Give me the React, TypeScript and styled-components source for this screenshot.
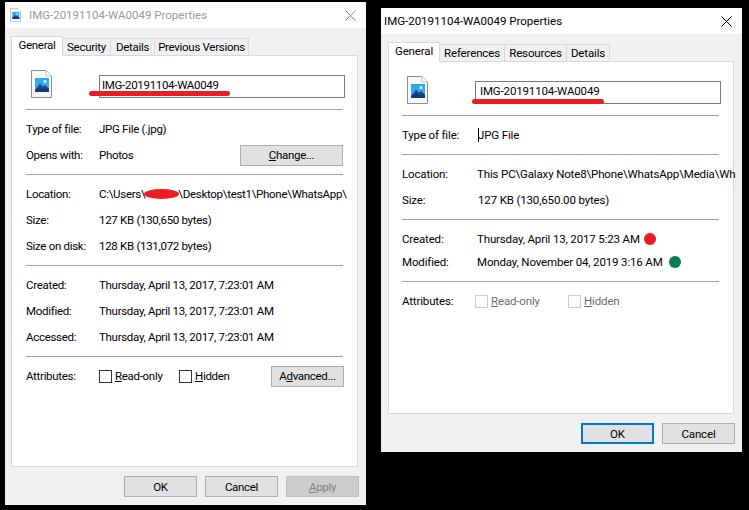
import styled, { createGlobalStyle } from 'styled-components';

const GlobalStyle = createGlobalStyle`
  html, body {
    margin: 0;
    padding: 0;
    background: #000;
  }
  * {
    box-sizing: border-box;
  }
`;

const Desktop = styled.div`
  display: flex;
  align-items: flex-start;
  gap: 15px;
  width: 749px;
  height: 510px;
  padding: 2px 0 0 5px;
  overflow: hidden;
  background: #000;
`;

const Window = styled.div<{ $height: number; $top: number; $label: number; $spacing: number }>`
  --label: ${(p) => p.$label}px;
  display: flex;
  flex-direction: column;
  flex: none;
  width: 361px;
  height: ${(p) => p.$height}px;
  margin-top: ${(p) => p.$top}px;
  background: #f0f0f0;
  color: #000;
  font-family: Roboto, 'Open Sans', sans-serif;
  font-size: 11.5px;
  letter-spacing: ${(p) => p.$spacing}px;
`;

const TitleBar = styled.div<{ $inactive?: boolean }>`
  display: flex;
  align-items: center;
  gap: 8px;
  flex: none;
  height: 26px;
  padding: 0 10px 0 ${(p) => (p.$inactive ? 5 : 3)}px;
  background: #fff;
  color: ${(p) => (p.$inactive ? '#999' : '#000')};
  font-size: 11.5px;
  letter-spacing: 0;
`;

const TitleText = styled.span`
  flex: 1;
  white-space: nowrap;
`;

const TabStrip = styled.div<{ $pad: number }>`
  display: flex;
  align-items: flex-end;
  flex: none;
  height: 28px;
  padding-left: ${(p) => p.$pad}px;
  margin-bottom: -1px;
  position: relative;
  z-index: 1;
`;

const Tab = styled.div<{ $active?: boolean; $width: number }>`
  display: flex;
  align-items: center;
  justify-content: center;
  width: ${(p) => p.$width}px;
  height: ${(p) => (p.$active ? 20 : 18)}px;
  margin-left: -1px;
  padding-bottom: ${(p) => (p.$active ? 3 : 0)}px;
  border: 1px solid #d9d9d9;
  border-bottom: ${(p) => (p.$active ? 'none' : '1px solid #d9d9d9')};
  background: ${(p) => (p.$active ? '#fff' : '#f0f0f0')};
  white-space: nowrap;
`;

const Panel = styled.div<{ $left: number; $pad: number }>`
  flex: 1;
  display: flex;
  flex-direction: column;
  margin: 0 8px 0 ${(p) => p.$left}px;
  padding: 0 14px 0 ${(p) => p.$pad}px;
  border: 1px solid #d9d9d9;
  background: #fff;
  min-height: 0;
`;

const Header = styled.div`
  display: grid;
  grid-template-columns: var(--label) 1fr;
  height: 53px;
  padding-top: 14px;
  position: relative;
`;

const IconSlot = styled.div`
  padding-left: 5px;
`;

const NameField = styled.div<{ $shift: number; $indent: number }>`
  display: flex;
  align-items: center;
  height: 23px;
  margin: 5px -2px 0 ${(p) => p.$shift}px;
  padding: 0 0 3px ${(p) => p.$indent}px;
  border: 1px solid #7a7a7a;
  background: #fff;
`;

const Scribble = styled.div<{ $left: number; $top: number; $width: number; $height: number }>`
  position: absolute;
  left: ${(p) => p.$left}px;
  top: ${(p) => p.$top}px;
  width: ${(p) => p.$width}px;
  height: ${(p) => p.$height}px;
  border-radius: 3px;
  background: #ed1c24;
`;

const Section = styled.div<{ $top?: number; $bottom?: number }>`
  padding: ${(p) => p.$top ?? 6}px 0 ${(p) => p.$bottom ?? 6}px;
  border-top: 1px solid #a0a0a0;
`;

const Row = styled.div<{ $height?: number }>`
  display: grid;
  grid-template-columns: var(--label) minmax(0, 1fr) auto;
  align-items: center;
  height: ${(p) => p.$height ?? 26}px;
`;

const Label = styled.span`
  padding-bottom: 1px;
  white-space: nowrap;
`;

const Value = styled.span<{ $indent?: number }>`
  display: flex;
  align-items: center;
  padding: 0 0 1px ${(p) => p.$indent ?? 0}px;
  white-space: nowrap;
`;

const Caret = styled.span`
  flex: none;
  width: 1px;
  height: 14px;
  margin-right: -1px;
  background: #000;
`;

const Redacted = styled.span`
  flex: none;
  width: 35px;
  height: 10px;
  margin: 0 -1px;
  border-radius: 50%;
  background: #ed1c24;
`;

const Dot = styled.span<{ $color: string; $gap: number }>`
  flex: none;
  width: 12px;
  height: 12px;
  margin-left: ${(p) => p.$gap}px;
  border-radius: 50%;
  background: ${(p) => p.$color};
`;

const Checks = styled.div<{ $shift?: number }>`
  display: flex;
  margin-left: ${(p) => p.$shift ?? 0}px;
`;

const Check = styled.label<{ $width: number; $disabled?: boolean }>`
  display: flex;
  align-items: center;
  gap: 3px;
  width: ${(p) => p.$width}px;
  color: ${(p) => (p.$disabled ? '#6d6d6d' : '#000')};
`;

const CheckBox = styled.span<{ $disabled?: boolean }>`
  flex: none;
  width: 13px;
  height: 13px;
  border: 1px solid ${(p) => (p.$disabled ? '#ccc' : '#333')};
  background: #fff;
`;

const Footer = styled.div`
  display: flex;
  justify-content: flex-end;
  gap: 8px;
  flex: none;
  height: 38px;
  padding: 9px 7px 0 0;
`;

const Button = styled.div<{ $width?: number; $default?: boolean; $disabled?: boolean; $pull?: number }>`
  display: flex;
  align-items: center;
  justify-content: center;
  width: ${(p) => p.$width ?? 73}px;
  height: 21px;
  margin-right: ${(p) => p.$pull ?? 0}px;
  border: ${(p) => (p.$default ? '2px solid #0078d7' : p.$disabled ? '1px solid #bfbfbf' : '1px solid #adadad')};
  background: ${(p) => (p.$disabled ? '#ccc' : '#e1e1e1')};
  color: ${(p) => (p.$disabled ? '#838383' : '#000')};
`;

const CloseIcon = styled.svg<{ $color: string }>`
  flex: none;
  width: 11px;
  height: 11px;
  stroke: ${(p) => p.$color};
  stroke-width: 1;
  fill: none;
`;

function FileIcon({ small }: { small?: boolean }) {
  const id = small ? 'sky-small' : 'sky';
  return (
    <svg width={small ? 11 : 21} height={small ? 14 : 28} viewBox="0 0 21 28" style={{ display: 'block', flex: 'none' }}>
      <defs>
        <linearGradient id={id} x1="0" y1="0" x2="0" y2="1">
          <stop offset="0" stopColor="#27a4ea" />
          <stop offset="1" stopColor="#4cb5f0" />
        </linearGradient>
      </defs>
      <path d="M0.5 0.5H15L20.5 6V27.5H0.5Z" fill="#f6f8fa" stroke="#8c8c8c" />
      <path d="M15 0.5V6H20.5" fill="#fff" stroke="#c4c4c4" />
      <rect x="4" y="8" width="14" height="14" fill={`url(#${id})`} />
      <rect x="12.5" y="10" width="3" height="3" fill="#c4e8fb" />
      <path d="M4 20L9 13.5L12 16.5L14 15L18 18.5V22H4Z" fill="#1d4f96" />
      <path d="M4 22V20L9 17L13 19L18 18.5V22Z" fill="#153a78" />
    </svg>
  );
}

function Close({ color }: { color: string }) {
  return (
    <CloseIcon $color={color} viewBox="0 0 11 11">
      <path d="M0.5 0.5L10.5 10.5M10.5 0.5L0.5 10.5" />
    </CloseIcon>
  );
}

export default function App() {
  return (
    <>
      <GlobalStyle />
      <Desktop>
        <Window $height={503} $top={0} $label={73} $spacing={-0.3}>
          <TitleBar $inactive>
            <FileIcon small />
            <TitleText>IMG-20191104-WA0049 Properties</TitleText>
            <Close color="#8a8a8a" />
          </TitleBar>
          <TabStrip $pad={7}>
            <Tab $active $width={52}>General</Tab>
            <Tab $width={49}>Security</Tab>
            <Tab $width={45}>Details</Tab>
            <Tab $width={95}>Previous Versions</Tab>
          </TabStrip>
          <Panel $left={6} $pad={14}>
            <Header>
              <IconSlot>
                <FileIcon />
              </IconSlot>
              <NameField $shift={0} $indent={2}>IMG-20191104-WA0049</NameField>
              <Scribble $left={63} $top={35} $width={141} $height={5} />
            </Header>
            <Section>
              <Row>
                <Label>Type of file:</Label>
                <Value>JPG File (.jpg)</Value>
              </Row>
              <Row>
                <Label>Opens with:</Label>
                <Value>Photos</Value>
                <Button $width={103}><span><u>C</u>hange...</span></Button>
              </Row>
            </Section>
            <Section>
              <Row>
                <Label>Location:</Label>
                <Value>C:\Users\<Redacted />\Desktop\test1\Phone\WhatsApp\</Value>
              </Row>
              <Row>
                <Label>Size:</Label>
                <Value>127 KB (130,650 bytes)</Value>
              </Row>
              <Row>
                <Label>Size on disk:</Label>
                <Value>128 KB (131,072 bytes)</Value>
              </Row>
            </Section>
            <Section>
              <Row>
                <Label>Created:</Label>
                <Value>Thursday, April 13, 2017, 7:23:01 AM</Value>
              </Row>
              <Row>
                <Label>Modified:</Label>
                <Value>Thursday, April 13, 2017, 7:23:01 AM</Value>
              </Row>
              <Row>
                <Label>Accessed:</Label>
                <Value>Thursday, April 13, 2017, 7:23:01 AM</Value>
              </Row>
            </Section>
            <Section>
              <Row>
                <Label>Attributes:</Label>
                <Checks>
                  <Check $width={80}><CheckBox /><span><u>R</u>ead-only</span></Check>
                  <Check $width={70}><CheckBox /><span><u>H</u>idden</span></Check>
                </Checks>
                <Button $pull={-1}><span>A<u>d</u>vanced...</span></Button>
              </Row>
            </Section>
          </Panel>
          <Footer>
            <Button>OK</Button>
            <Button>Cancel</Button>
            <Button $disabled><span><u>A</u>pply</span></Button>
          </Footer>
        </Window>

        <Window $height={444} $top={6} $label={75} $spacing={-0.15}>
          <TitleBar>
            <TitleText>IMG-20191104-WA0049 Properties</TitleText>
            <Close color="#000" />
          </TitleBar>
          <TabStrip $pad={8}>
            <Tab $active $width={52}>General</Tab>
            <Tab $width={66}>References</Tab>
            <Tab $width={63}>Resources</Tab>
            <Tab $width={44}>Details</Tab>
          </TabStrip>
          <Panel $left={7} $pad={13}>
            <Header>
              <IconSlot>
                <FileIcon />
              </IconSlot>
              <NameField $shift={-2} $indent={4}>IMG-20191104-WA0049</NameField>
              <Scribble $left={70} $top={37} $width={132} $height={5} />
            </Header>
            <Section>
              <Row>
                <Label>Type of file:</Label>
                <Value $indent={1}><Caret />JPG File</Value>
              </Row>
            </Section>
            <Section>
              <Row>
                <Label>Location:</Label>
                <Value>This PC\Galaxy Note8\Phone\WhatsApp\Media\Wh</Value>
              </Row>
              <Row>
                <Label>Size:</Label>
                <Value $indent={1}>127 KB (130,650.00 bytes)</Value>
              </Row>
            </Section>
            <Section $top={8} $bottom={7}>
              <Row $height={23}>
                <Label>Created:</Label>
                <Value>Thursday, April 13, 2017 5:23 AM<Dot $color="#ed1c24" $gap={4} /></Value>
              </Row>
              <Row $height={23}>
                <Label>Modified:</Label>
                <Value>Monday, November 04, 2019 3:16 AM<Dot $color="#0a7d52" $gap={6} /></Value>
              </Row>
            </Section>
            <Section>
              <Row>
                <Label>Attributes:</Label>
                <Checks $shift={-2}>
                  <Check $width={93} $disabled><CheckBox $disabled /><span><u>R</u>ead-only</span></Check>
                  <Check $width={70} $disabled><CheckBox $disabled /><span><u>H</u>idden</span></Check>
                </Checks>
              </Row>
            </Section>
          </Panel>
          <Footer>
            <Button $default>OK</Button>
            <Button>Cancel</Button>
          </Footer>
        </Window>
      </Desktop>
    </>
  );
}
